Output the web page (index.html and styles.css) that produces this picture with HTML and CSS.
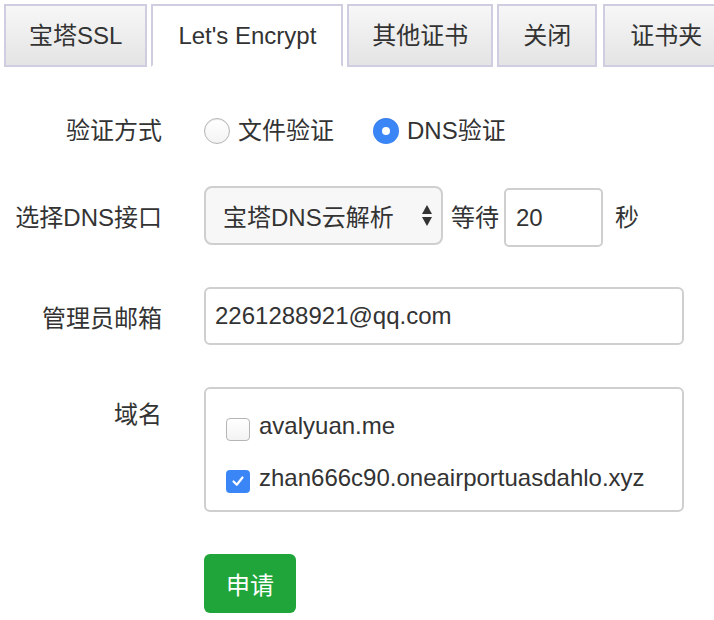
FILE: index.html
```html
<!DOCTYPE html>
<html lang="zh-CN">
<head>
<meta charset="utf-8">
<title>SSL</title>
<link rel="stylesheet" href="styles.css">
</head>
<body>
<div class="tabs">
  <div class="tab">宝塔SSL</div>
  <div class="tab tab-active">Let's Encrypt</div>
  <div class="tab">其他证书</div>
  <div class="tab tab-close">关闭</div>
  <div class="tab tab-last">证书夹</div>
</div>
<form class="form">
  <div class="row row-verify">
    <div class="label">验证方式</div>
    <div class="control">
      <span class="radio"></span><span class="opt-text">文件验证</span>
      <span class="radio radio-on"></span><span class="opt-text">DNS验证</span>
    </div>
  </div>
  <div class="row row-dns">
    <div class="label">选择DNS接口</div>
    <div class="control">
      <div class="select">
        <span>宝塔DNS云解析</span>
        <svg class="select-arrows" width="12" height="24" viewBox="0 0 12 24"><path d="M6 1 L11 10 L1 10 Z" fill="#333"/><path d="M1 13 L11 13 L6 22 Z" fill="#333"/></svg>
      </div>
      <span class="wait">等待</span>
      <input class="input input-wait" type="text" value="20">
      <span class="sec">秒</span>
    </div>
  </div>
  <div class="row row-email">
    <div class="label">管理员邮箱</div>
    <div class="control">
      <input class="input input-email" type="text" value="2261288921@qq.com">
    </div>
  </div>
  <div class="row row-domain">
    <div class="label label-top">域名</div>
    <div class="control">
      <div class="domain-box">
        <div class="domain-item"><span class="check"></span><span>avalyuan.me</span></div>
        <div class="domain-item"><span class="check check-on"><svg width="16" height="16" viewBox="0 0 16 16"><path d="M3.5 8.5 L6.8 11.8 L12.5 4.5" fill="none" stroke="#fff" stroke-width="2.2" stroke-linecap="round" stroke-linejoin="round"/></svg></span><span>zhan666c90.oneairportuasdahlo.xyz</span></div>
      </div>
    </div>
  </div>
  <div class="row row-btn">
    <div class="label"></div>
    <div class="control">
      <button class="btn" type="button">申请</button>
    </div>
  </div>
</form>
</body>
</html>
```
FILE: styles.css
```css
* { box-sizing: border-box; }
html, body {
  margin: 0;
  padding: 0;
  background: #fff;
}
body {
  font-family: "Liberation Sans", "Noto Sans CJK SC", sans-serif;
  font-size: 24px;
  color: #333;
  width: 714px;
  height: 620px;
  overflow: hidden;
}
.tabs {
  display: flex;
  gap: 4px;
  padding: 4px 0 0 4px;
  overflow: hidden;
  white-space: nowrap;
}
.tab {
  flex-shrink: 0;
  height: 63px;
  line-height: 59px;
  padding: 0 23px;
  border: 2px solid #cfcde0;
  background: linear-gradient(#f7f7f7, #e4e4e4);
  color: #333;
}
.tab-active {
  background: #fff;
  padding: 0 25px;
  border-bottom-color: #fff;
}
.tab-close {
  padding: 0 24px;
  margin-right: 2px;
}
.tab-last {
  padding: 0 25px;
}
.form {
  padding-top: 31px;
}
.row {
  display: grid;
  grid-template-columns: 162px 1fr;
  column-gap: 42px;
  align-items: center;
}
.label {
  text-align: right;
  color: #333;
}
.control {
  display: flex;
  align-items: center;
}
.row-verify { height: 60px; }
.row-dns { height: 59px; margin-top: 26px; }
.row-email { height: 58px; margin-top: 44px; }
.row-domain { margin-top: 42px; align-items: start; }
.row-btn { margin-top: 42px; }
.label-top {
  line-height: 34px;
  margin-top: 11px;
}
.radio {
  width: 26px;
  height: 26px;
  border-radius: 50%;
  border: 1px solid #b5b5b5;
  background: linear-gradient(#ffffff, #f3f3f3);
  box-shadow: inset 0 1px 1px rgba(0,0,0,0.08);
  flex-shrink: 0;
  margin-top: 5px;
}
.radio-on {
  border: none;
  background: #3b86f7;
  position: relative;
  margin-left: 39px;
}
.radio-on::after {
  content: "";
  position: absolute;
  left: 9px;
  top: 9px;
  width: 8px;
  height: 8px;
  border-radius: 50%;
  background: #fff;
}
.opt-text {
  margin-left: 8px;
}
.select {
  width: 239px;
  height: 59px;
  border: 2px solid #cfcfcf;
  border-radius: 8px;
  background: #f7f7f7;
  display: flex;
  align-items: center;
  justify-content: space-between;
  padding: 0 8px 0 17px;
}
.select-arrows {
  display: block;
}
.wait {
  margin-left: 8px;
}
.input {
  font-family: inherit;
  font-size: 24px;
  color: #333;
  border: 2px solid #cfcfcf;
  background: #fff;
  outline: none;
  margin: 0;
}
.input-wait {
  width: 99px;
  height: 59px;
  margin-left: 5px;
  margin-top: 4px;
  border-radius: 5px;
  padding: 0 10px;
}
.sec {
  margin-left: 12px;
}
.input-email {
  width: 480px;
  height: 58px;
  border-radius: 6px;
  padding: 0 9px;
}
.domain-box {
  width: 480px;
  height: 125px;
  border: 2px solid #cfcfcf;
  border-radius: 6px;
  padding: 20px 20px 13px;
  display: flex;
  flex-direction: column;
  gap: 18px;
}
.domain-item {
  display: flex;
  align-items: center;
  line-height: 34px;
  height: 34px;
}
.check {
  width: 24px;
  height: 23px;
  border-radius: 4px;
  border: 1px solid #b5b5b5;
  background: linear-gradient(#ffffff, #f3f3f3);
  margin-right: 9px;
  margin-top: 6px;
  flex-shrink: 0;
  display: flex;
  align-items: center;
  justify-content: center;
}
.check-on {
  border: none;
  background: #3b86f7;
}
.btn {
  font-family: inherit;
  font-size: 24px;
  color: #fff;
  background: #20a53a;
  border: none;
  border-radius: 6px;
  width: 92px;
  height: 59px;
  padding: 0;
  cursor: pointer;
}
```
